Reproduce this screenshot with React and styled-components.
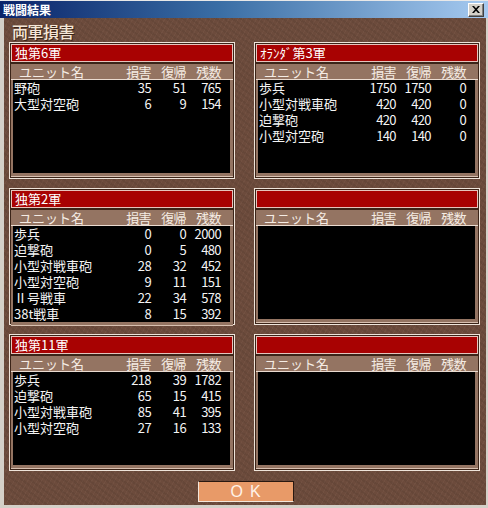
import React from 'react';
import styled, { createGlobalStyle } from 'styled-components';

const GlobalStyle = createGlobalStyle`
  html, body {
    margin: 0;
    padding: 0;
    background: #d4d0c8;
  }
  * {
    box-sizing: border-box;
  }
`;

const JP = `"Noto Sans CJK JP", "Noto Sans", sans-serif`;

const Window = styled.div`
  width: 488px;
  height: 508px;
  display: flex;
  flex-direction: column;
  background: #d4d0c8;
  font-family: ${JP};
`;

const TitleBar = styled.div`
  height: 18px;
  display: flex;
  align-items: center;
  justify-content: space-between;
  padding: 0 4px 0 3px;
  border-top: 1px solid #e8e8e8;
  background: linear-gradient(90deg, #0a246a 0%, #3a6ea5 45%, #a6caf0 100%);
`;

const Caption = styled.span`
  color: #fff;
  font-size: 12px;
  font-weight: 700;
  line-height: 16px;
`;

const CloseButton = styled.button`
  width: 16px;
  height: 14px;
  padding: 0;
  display: flex;
  align-items: center;
  justify-content: center;
  background: #d4d0c8;
  border: 1px solid;
  border-color: #fff #404040 #404040 #fff;
  box-shadow: inset -1px -1px 0 #808080;
`;

const Frame = styled.div`
  flex: 1;
  display: flex;
  padding: 0 3px 3px 4px;
`;

const Body = styled.main`
  flex: 1;
  display: flex;
  flex-direction: column;
  padding: 4px 6px 0 5px;
  background-color: #6c4b3c;
  background-image:
    repeating-linear-gradient(37deg, rgba(0, 0, 0, 0.06) 0 2px, transparent 2px 5px),
    repeating-linear-gradient(-61deg, rgba(255, 220, 200, 0.04) 0 1px, transparent 1px 4px);
`;

const Heading = styled.h1`
  margin: 0 0 2px 3px;
  height: 18px;
  font-size: 16px;
  line-height: 18px;
  font-weight: 500;
  color: #f5e6d6;
  letter-spacing: -0.5px;
  text-shadow: 1px 1px 0 #3a2418;
`;

const Grid = styled.div`
  display: grid;
  grid-template-columns: 226px 226px;
  grid-auto-rows: 137px;
  column-gap: 19px;
  row-gap: 9px;
`;

const Panel = styled.section`
  display: flex;
  flex-direction: column;
  padding: 1px;
  border: 1px solid #efe4da;
  background: #3b2418;
`;

const Banner = styled.div`
  height: 18px;
  padding: 0 3px;
  border: 1px solid #e6c4bc;
  background: #a80202;
  color: #fff;
  font-size: 13px;
  line-height: 16px;
  white-space: nowrap;
`;

const ListFrame = styled.div`
  flex: 1;
  display: flex;
  flex-direction: column;
  margin-top: 2px;
  padding: 0 3px 3px 2px;
  background: #947462;
  border-bottom: 1px solid #d8c0b0;
`;

const Columns = styled.div`
  display: grid;
  grid-template-columns: 1fr 35px 35px 35px;
  padding: 0 9px 0 1px;
`;

const HeaderRow = styled(Columns)`
  height: 16px;
  margin: 0 -3px 0 -2px;
  padding: 0 12px 0 8px;
  border-bottom: 1px solid #eadbd0;
  color: #f5ece4;
  font-size: 13px;
  line-height: 15px;
  white-space: nowrap;
`;

const List = styled.div`
  flex: 1;
  background: #000;
`;

const Row = styled(Columns)`
  height: 16px;
  color: #f4f4f4;
  font-size: 13px;
  line-height: 16px;
  white-space: nowrap;
`;

const Cell = styled.span`
  text-align: ${(p) => (p.$num ? 'right' : 'left')};
  letter-spacing: ${(p) => (p.$num ? '-0.6px' : '0')};
`;

const Footer = styled.div`
  display: flex;
  justify-content: center;
  padding: 10px 0 0 3px;
`;

const OkButton = styled.button`
  width: 96px;
  height: 21px;
  padding: 0 0 0 6px;
  border: 1px solid;
  border-color: #2a1810 #2a1810 #f4e6da #f4e6da;
  background: #e89a68;
  color: #fff3e8;
  font-family: "Liberation Sans", sans-serif;
  font-size: 16px;
  line-height: 19px;
  letter-spacing: 7px;
`;

const armies = [
  {
    name: '独第6軍',
    units: [
      ['野砲', 35, 51, 765],
      ['大型対空砲', 6, 9, 154],
    ],
  },
  {
    name: 'ｵﾗﾝﾀﾞ第3軍',
    units: [
      ['歩兵', 1750, 1750, 0],
      ['小型対戦車砲', 420, 420, 0],
      ['迫撃砲', 420, 420, 0],
      ['小型対空砲', 140, 140, 0],
    ],
  },
  {
    name: '独第2軍',
    units: [
      ['歩兵', 0, 0, 2000],
      ['迫撃砲', 0, 5, 480],
      ['小型対戦車砲', 28, 32, 452],
      ['小型対空砲', 9, 11, 151],
      ['Ⅱ号戦車', 22, 34, 578],
      ['38t戦車', 8, 15, 392],
    ],
  },
  { name: '', units: [] },
  {
    name: '独第11軍',
    units: [
      ['歩兵', 218, 39, 1782],
      ['迫撃砲', 65, 15, 415],
      ['小型対戦車砲', 85, 41, 395],
      ['小型対空砲', 27, 16, 133],
    ],
  },
  { name: '', units: [] },
];

function ArmyPanel({ army }) {
  return (
    <Panel>
      <Banner>{army.name}</Banner>
      <ListFrame>
        <HeaderRow>
          <Cell>ユニット名</Cell>
          <Cell $num>損害</Cell>
          <Cell $num>復帰</Cell>
          <Cell $num>残数</Cell>
        </HeaderRow>
        <List>
          {army.units.map(([unit, lost, back, left]) => (
            <Row key={unit}>
              <Cell>{unit}</Cell>
              <Cell $num>{lost}</Cell>
              <Cell $num>{back}</Cell>
              <Cell $num>{left}</Cell>
            </Row>
          ))}
        </List>
      </ListFrame>
    </Panel>
  );
}

export default function App() {
  return (
    <>
      <GlobalStyle />
      <Window>
        <TitleBar>
          <Caption>戦闘結果</Caption>
          <CloseButton aria-label="close">
            <svg width="8" height="7" viewBox="0 0 8 7">
              <path d="M0 0h2l2 2.2L6 0h2L5 3.5 8 7H6L4 4.8 2 7H0l3-3.5z" fill="#000" />
            </svg>
          </CloseButton>
        </TitleBar>
        <Frame>
          <Body>
            <Heading>両軍損害</Heading>
            <Grid>
              {armies.map((army, i) => (
                <ArmyPanel key={i} army={army} />
              ))}
            </Grid>
            <Footer>
              <OkButton>OK</OkButton>
            </Footer>
          </Body>
        </Frame>
      </Window>
    </>
  );
}
